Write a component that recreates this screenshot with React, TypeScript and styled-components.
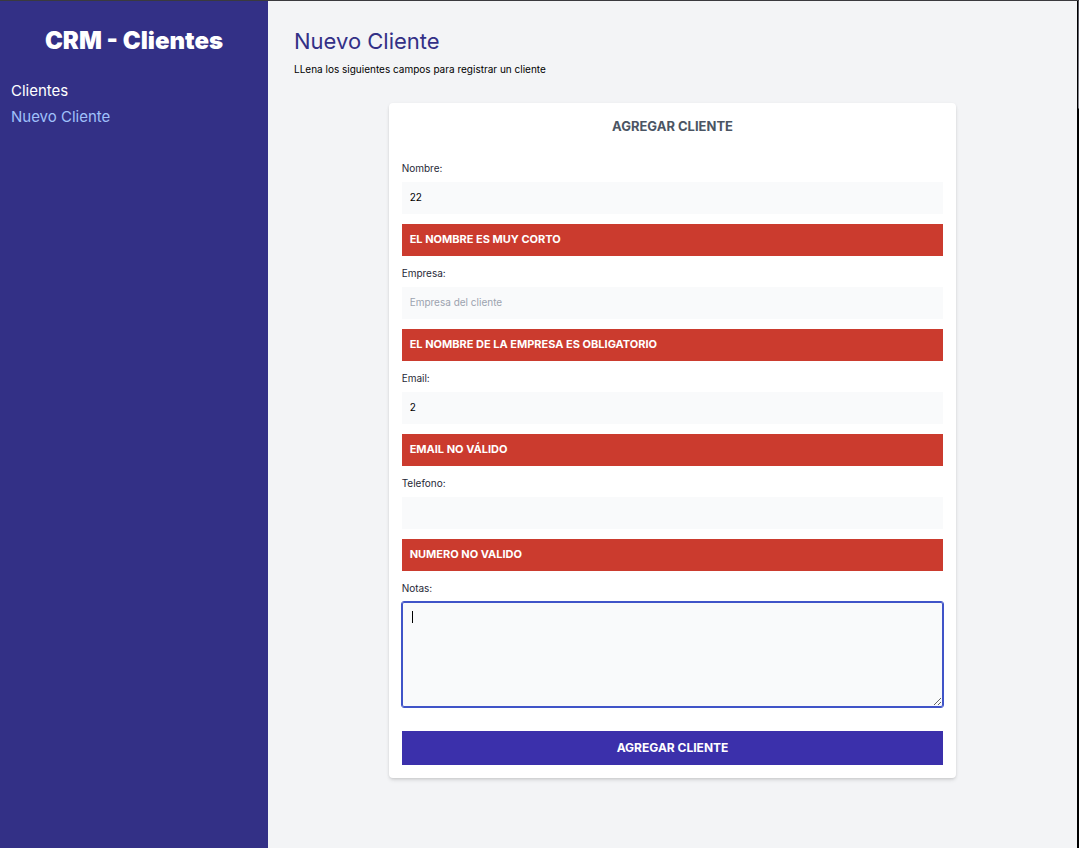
import React from 'react';
import styled, { createGlobalStyle } from 'styled-components';

const GlobalStyle = createGlobalStyle`
  *, *::before, *::after { box-sizing: border-box; }
  body {
    margin: 0;
    background: #f3f4f6;
    color: #000;
    font-family: Inter, 'Liberation Sans', sans-serif;
    font-size: 10px;
    line-height: 16px;
  }
  h1, h2, p { margin: 0; }
  input, textarea, button { font: inherit; color: inherit; }
`;

const Page = styled.div`
  display: flex;
  min-height: 100vh;
  border-top: 1px solid #3a3a3e;
`;

const Sidebar = styled.aside`
  flex: 0 0 268px;
  padding: 24px 11px;
  background: #333086;
`;

const Brand = styled.h2`
  color: #fff;
  font-size: 24px;
  line-height: 32px;
  font-weight: 900;
  text-align: center;
`;

const Nav = styled.nav`
  display: flex;
  flex-direction: column;
  align-items: flex-start;
  gap: 2px;
  margin-top: 22px;
`;

const NavLink = styled.a<{ $active?: boolean }>`
  color: ${({ $active }) => ($active ? '#a0c1fb' : '#fff')};
  font-size: 15px;
  line-height: 24px;
  text-decoration: none;
`;

const Main = styled.main`
  flex: 1;
  min-width: 0;
  padding: 24px 26px;
`;

const Title = styled.h1`
  color: #333086;
  font-size: 22px;
  line-height: 32px;
  font-weight: 400;
`;

const Intro = styled.p`
  margin-top: 4px;
`;

const WindowEdge = styled.div`
  flex: 0 0 2px;
  border-left: 1px solid #000;
  background: linear-gradient(#50505a, #85858d 107px, #000 108px);
`;

const Card = styled.section`
  width: 75%;
  margin: 26px auto 0;
  padding: 13px;
  background: #fff;
  border-radius: 4px;
  box-shadow: 0 3px 4px -1px rgba(0, 0, 0, 0.1), 0 1px 3px rgba(0, 0, 0, 0.1);
`;

const CardTitle = styled.h2`
  color: #4b5563;
  font-size: 13px;
  line-height: 20px;
  font-weight: 700;
  text-align: center;
  text-transform: uppercase;
`;

const Form = styled.form`
  margin-top: 24px;
`;

const Field = styled.div`
  margin-bottom: 9px;
`;

const Label = styled.label`
  display: block;
  margin-bottom: 6px;
  color: #1f2937;
`;

const Input = styled.input`
  display: block;
  width: 100%;
  height: 32px;
  padding: 7px 8px 9px;
  border: 0;
  background: #f9fafb;
  &::placeholder { color: #9ca3af; opacity: 1; }
`;

const Alert = styled.p`
  margin-top: 10px;
  padding: 7px 8px 9px;
  background: #cb3b2e;
  color: #fff;
  font-size: 11px;
  font-weight: 700;
  text-transform: uppercase;
`;

const NotesBox = styled.div`
  position: relative;
`;

const Notes = styled.textarea`
  display: block;
  width: 100%;
  height: 105px;
  padding: 8px;
  border: 1px solid #4054c8;
  border-radius: 2px;
  outline: 1px solid #4054c8;
  background: #f9fafb;
  caret-color: transparent;
  resize: vertical;
`;

const Caret = styled.span`
  position: absolute;
  top: 9px;
  left: 10px;
  width: 1px;
  height: 12px;
  background: #000;
`;

const Submit = styled.button`
  display: block;
  width: 100%;
  margin-top: 24px;
  padding: 7px;
  border: 0;
  background: #3b30ab;
  color: #fff;
  font-size: 12px;
  line-height: 20px;
  font-weight: 700;
  text-transform: uppercase;
  cursor: pointer;
`;

const fields = [
  { id: 'nombre', label: 'Nombre:', type: 'text', value: '22', placeholder: 'Nombre del cliente', error: 'El nombre es muy corto' },
  { id: 'empresa', label: 'Empresa:', type: 'text', value: '', placeholder: 'Empresa del cliente', error: 'El nombre de la empresa es obligatorio' },
  { id: 'email', label: 'Email:', type: 'email', value: '2', placeholder: 'Email del cliente', error: 'Email no válido' },
  { id: 'telefono', label: 'Telefono:', type: 'tel', value: '', placeholder: '', error: 'Numero no valido' },
];

export default function App() {
  return (
    <>
      <GlobalStyle />
      <Page>
        <Sidebar>
          <Brand>CRM - Clientes</Brand>
          <Nav>
            <NavLink href="#clientes">Clientes</NavLink>
            <NavLink href="#nuevo" $active>Nuevo Cliente</NavLink>
          </Nav>
        </Sidebar>
        <Main>
          <Title>Nuevo Cliente</Title>
          <Intro>LLena los siguientes campos para registrar un cliente</Intro>
          <Card>
            <CardTitle>Agregar Cliente</CardTitle>
            <Form noValidate onSubmit={(e) => e.preventDefault()}>
              {fields.map((f) => (
                <Field key={f.id}>
                  <Label htmlFor={f.id}>{f.label}</Label>
                  <Input id={f.id} type={f.type} defaultValue={f.value} placeholder={f.placeholder} />
                  <Alert>{f.error}</Alert>
                </Field>
              ))}
              <Label htmlFor="notas">Notas:</Label>
              <NotesBox>
                <Notes id="notas" />
                <Caret />
              </NotesBox>
              <Submit type="submit">Agregar Cliente</Submit>
            </Form>
          </Card>
        </Main>
        <WindowEdge />
      </Page>
    </>
  );
}
